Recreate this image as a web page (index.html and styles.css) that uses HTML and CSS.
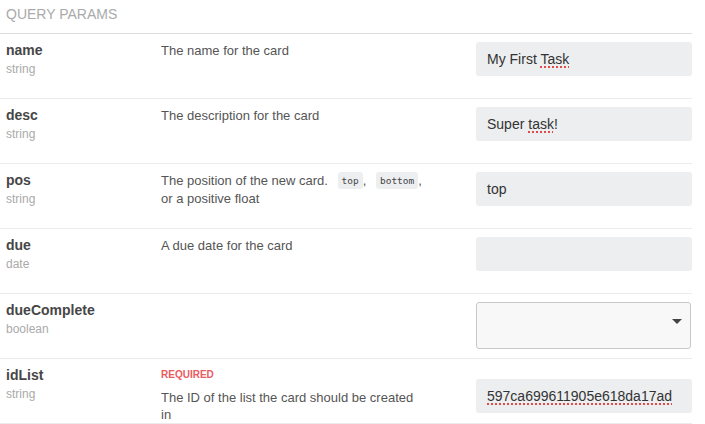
FILE: index.html
```html
<!DOCTYPE html>
<html>
<head>
<meta charset="utf-8">
<link rel="stylesheet" href="styles.css">
</head>
<body>
<div class="params">
  <div class="header">QUERY PARAMS</div>

  <div class="row">
    <div class="pname"><div class="name">name</div><div class="type">string</div></div>
    <div class="desc">The name for the card</div>
    <div class="field"><div class="input">My First <span class="spell">Task</span></div></div>
  </div>

  <div class="row">
    <div class="pname"><div class="name">desc</div><div class="type">string</div></div>
    <div class="desc">The description for the card</div>
    <div class="field"><div class="input">Super <span class="spell">task</span>!</div></div>
  </div>

  <div class="row">
    <div class="pname"><div class="name">pos</div><div class="type">string</div></div>
    <div class="desc">The position of the new card. <code>top</code>, <code>bottom</code>, or a positive float</div>
    <div class="field"><div class="input">top</div></div>
  </div>

  <div class="row">
    <div class="pname"><div class="name">due</div><div class="type">date</div></div>
    <div class="desc">A due date for the card</div>
    <div class="field"><div class="input"></div></div>
  </div>

  <div class="row">
    <div class="pname"><div class="name">dueComplete</div><div class="type">boolean</div></div>
    <div class="desc"></div>
    <div class="field"><div class="select"><span class="caret"></span></div></div>
  </div>

  <div class="row">
    <div class="pname"><div class="name">idList</div><div class="type">string</div></div>
    <div class="desc"><div class="required">REQUIRED</div><div class="req-text">The ID of the list the card should be created in</div></div>
    <div class="field"><div class="input lower"><span class="spell">597ca699611905e618da17ad</span></div></div>
  </div>
</div>
</body>
</html>
```

FILE: styles.css
```css
html, body {
  margin: 0;
  padding: 0;
  background: #fff;
}
body {
  font-family: "Liberation Sans", Arial, sans-serif;
  color: #555;
}
.params {
  width: 692px;
}
.header {
  box-sizing: border-box;
  height: 34px;
  padding: 6px 6px 0;
  font-size: 14px;
  line-height: 16px;
  color: #aaa;
  border-bottom: 1px solid #dcdcdc;
}
.row {
  box-sizing: border-box;
  height: 65px;
  padding-top: 8px;
  display: flex;
  align-items: flex-start;
  border-bottom: 1px solid #ececec;
}
.row:first-of-type {
  height: 66px;
}
.pname {
  width: 155px;
  padding-left: 6px;
  box-sizing: border-box;
}
.name {
  font-size: 14px;
  line-height: 17px;
  font-weight: bold;
  color: #464646;
}
.type {
  font-size: 12px;
  line-height: 17px;
  margin-top: 2px;
  color: #aaa;
}
.desc {
  width: 262px;
  padding-left: 6px;
  font-size: 13px;
  line-height: 18px;
  color: #555;
}
.desc code {
  display: inline-block;
  font-family: "DejaVu Sans Mono", "Liberation Mono", monospace;
  font-size: 9.5px;
  line-height: 17px;
  background: #eceef0;
  border-radius: 3px;
  padding: 0 4px;
  margin-left: 6px;
  color: #444;
  vertical-align: 1px;
}
.required {
  font-size: 10px;
  line-height: 16px;
  font-weight: bold;
  color: #ea5a5f;
}
.req-text {
  margin-top: 6px;
  line-height: 17px;
}
.field {
  margin-left: auto;
}
.input {
  box-sizing: border-box;
  width: 216px;
  height: 34px;
  padding: 0 11px;
  background: #eceef0;
  border-radius: 3px;
  font-size: 14px;
  line-height: 34px;
  color: #333;
  white-space: nowrap;
  overflow: hidden;
}
.input.lower {
  margin-top: 12px;
}
.spell {
  text-decoration: underline dotted #e24a4a;
  text-decoration-thickness: 1.5px;
  text-underline-offset: 2px;
}
.select {
  position: relative;
  box-sizing: border-box;
  width: 215px;
  height: 47px;
  margin-right: 1px;
  background: #f8f8f8;
  border: 1px solid #c8c8c8;
  border-radius: 3px;
}
.caret {
  position: absolute;
  right: 8px;
  top: 16px;
  width: 0;
  height: 0;
  border-left: 5px solid transparent;
  border-right: 5px solid transparent;
  border-top: 5px solid #444;
}
```
